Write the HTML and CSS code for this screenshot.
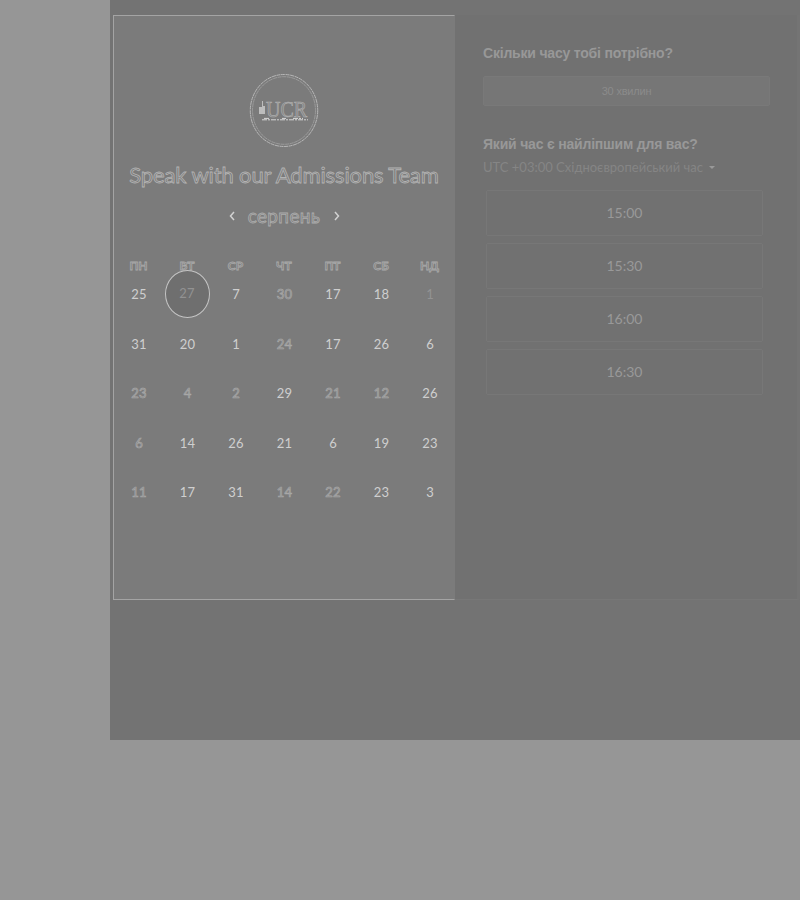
FILE: index.html
```html
<!DOCTYPE html>
<html lang="uk">
<head>
<meta charset="utf-8">
<title>Speak with our Admissions Team</title>
<link rel="stylesheet" href="styles.css">
</head>
<body>
<main class="page">
  <div class="booking">
    <section class="calendar">
      <svg class="logo" viewBox="0 0 70 76" width="70" height="76">
        <ellipse class="ring" cx="35" cy="37.5" rx="33.7" ry="36"/>
        <ellipse class="ring inner" cx="35" cy="37.5" rx="31.5" ry="33.8"/>
        <path class="tower" d="M10 34h3v-6h1v5h2v8h-6z"/>
        <text class="mark" x="17" y="43.5" textLength="41" lengthAdjust="spacingAndGlyphs">UCR</text>
        <path class="tagline" d="M13 46.8H59M15 45.4H21M33 45.4H37M44 45.4H54"/>
      </svg>
      <h1 class="title">Speak with our Admissions Team</h1>
      <div class="month">
        <svg class="arrow" viewBox="0 0 6 10" width="6" height="10"><path d="M5 1L1.5 5L5 9"/></svg>
        <span class="month-name">серпень</span>
        <svg class="arrow" viewBox="0 0 6 10" width="6" height="10"><path d="M1 1L4.5 5L1 9"/></svg>
      </div>
      <div class="weekdays"><span>ПН</span><span>ВТ</span><span>СР</span><span>ЧТ</span><span>ПТ</span><span>СБ</span><span>НД</span></div>
      <div class="days">
        <span>25</span><span class="selected">27</span><span>7</span><span class="soft">30</span><span>17</span><span>18</span><span class="faint">1</span>
        <span>31</span><span>20</span><span>1</span><span class="soft">24</span><span>17</span><span>26</span><span>6</span>
        <span class="soft">23</span><span class="soft">4</span><span class="soft">2</span><span>29</span><span class="soft">21</span><span class="soft">12</span><span>26</span>
        <span class="soft">6</span><span>14</span><span>26</span><span>21</span><span>6</span><span>19</span><span>23</span>
        <span class="soft">11</span><span>17</span><span>31</span><span class="soft">14</span><span class="soft">22</span><span>23</span><span>3</span>
      </div>
    </section>
    <section class="times">
      <h2 class="question">Скільки часу тобі потрібно?</h2>
      <div class="duration">30 хвилин</div>
      <h2 class="question second">Який час є найліпшим для вас?</h2>
      <div class="zone"><span>UTC +03:00 Східноєвропейський час</span><i class="caret"></i></div>
      <div class="slots">
        <div class="slot">15:00</div>
        <div class="slot">15:30</div>
        <div class="slot">16:00</div>
        <div class="slot">16:30</div>
      </div>
    </section>
  </div>
</main>
</body>
</html>
```
FILE: styles.css
```css
* { box-sizing: border-box; }
body {
  margin: 0;
  height: 900px;
  overflow: hidden;
  background: #969696;
  font-family: Lato, "Open Sans", sans-serif;
}
.page {
  margin-left: 110px;
  height: 740px;
  padding: 15px 0 0 3px;
  background: #737373;
}
.booking { display: flex; height: 585px; }
.calendar {
  width: 342px;
  padding-top: 57px;
  background: #7b7b7b;
  border: 1px solid #a4a4a4;
  border-right-color: #7b7b7b;
  display: flex;
  flex-direction: column;
  align-items: center;
}
.logo { display: block; }
.ring { fill: none; stroke: #bdbdbd; stroke-width: .9; stroke-dasharray: 4 .6; }
.inner { stroke: #a2a2a2; stroke-width: .8; }
.tower { fill: #bdbdbd; }
.mark {
  font: 24px "Liberation Serif", serif;
  fill: #858585;
  stroke: #b0b0b0;
  stroke-width: .7;
}
.tagline { fill: none; stroke: #d8d8d8; stroke-width: 1; stroke-dasharray: 5 1 2 1; }
.title {
  margin: 12px 0 0;
  font-size: 22px;
  font-weight: 400;
  letter-spacing: -.13px;
  line-height: 28px;
  white-space: nowrap;
  color: #7b7b7b;
  -webkit-text-stroke: .8px #b4b4b4;
}
.month {
  display: flex;
  align-items: center;
  gap: 13px;
  height: 24px;
  margin-top: 15px;
}
.month-name {
  width: 73px;
  text-align: center;
  font-size: 19px;
  letter-spacing: .35px;
  line-height: 24px;
  color: #7b7b7b;
  -webkit-text-stroke: .8px #adadad;
}
.arrow { fill: none; stroke: #d2d2d2; stroke-width: 1.5; }
.weekdays, .days {
  display: grid;
  grid-template-columns: repeat(7, 48.5px);
  justify-items: center;
  width: 339.5px;
}
.weekdays {
  margin-top: 30px;
  height: 16px;
  font-size: 12px;
  line-height: 16px;
  font-weight: 700;
  color: #7b7b7b;
  -webkit-text-stroke: .8px #aaa;
}
.days {
  grid-auto-rows: 49.5px;
  align-items: center;
  margin-top: -5px;
  font-size: 13px;
  letter-spacing: .2px;
  color: #cfcfcf;
}
.days span:not(.selected) { padding: 1px 0 0 1px; }
.days .soft { color: #7f7f7f; -webkit-text-stroke: .7px #a8a8a8; }
.days .faint { color: #939393; }
.selected {
  width: 45px;
  height: 48px;
  border: 1px solid #c4c4c4;
  border-radius: 50%;
  background: #6f6f6f;
  color: #929292;
  line-height: 45px;
  text-align: center;
}
.times {
  flex: 1;
  padding: 29px 0 0 28px;
  background: #717171;
  border-right: 3px solid #747474;
  border-bottom: 1px solid #777;
  color: #929292;
}
.question {
  margin: 0;
  font: bold 14px/18px "Liberation Sans", sans-serif;
  letter-spacing: -.2px;
  color: #989898;
  white-space: nowrap;
}
.duration {
  width: 287px;
  height: 30px;
  margin-top: 14px;
  border: 1px solid #797979;
  border-radius: 2px;
  background: #767676;
  font: 11px/28px "Liberation Sans", sans-serif;
  letter-spacing: -.2px;
  text-align: center;
  color: #8b8b8b;
}
.second { margin-top: 29px; }
.zone {
  display: flex;
  align-items: center;
  gap: 6px;
  height: 20px;
  margin-top: 4px;
  font-size: 13px;
  white-space: nowrap;
  color: #858585;
}
.caret {
  border: 3px solid transparent;
  border-top-color: #999;
  border-bottom-width: 0;
}
.slots {
  display: grid;
  gap: 7px;
  width: 277px;
  margin: 13px 0 0 3px;
}
.slot {
  height: 46px;
  border: 1px solid #777;
  border-radius: 2px;
  font-size: 14px;
  line-height: 43px;
  text-align: center;
  color: #999;
}
```
